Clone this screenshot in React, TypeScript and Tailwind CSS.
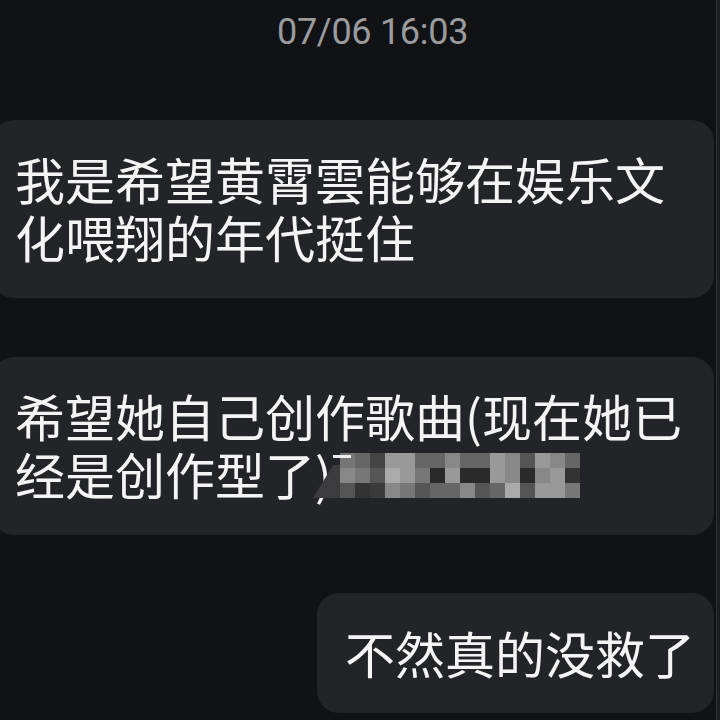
const mosaic = [
  ['bg-[#757575]', 'bg-[#666666]', 'bg-[#444444]', 'bg-[#999999]', 'bg-[#999999]', 'bg-[#666666]', 'bg-[#666666]', 'bg-[#888888]', 'bg-[#666666]', 'bg-[#666666]', 'bg-[#999999]', 'bg-[#888888]', 'bg-[#555555]', 'bg-[#999999]', 'bg-[#888888]', 'bg-[#666666]'],
  ['bg-[#888888]', 'bg-[#777777]', 'bg-[#555555]', 'bg-[#aaaaaa]', 'bg-[#999999]', 'bg-[#777777]', 'bg-[#2a2a2a]', 'bg-[#999999]', 'bg-[#2a2a2a]', 'bg-[#2a2a2a]', 'bg-[#999999]', 'bg-[#888888]', 'bg-[#2a2a2a]', 'bg-[#888888]', 'bg-[#999999]', 'bg-[#333333]'],
  ['bg-[#555555]', 'bg-[#333333]', 'bg-[#3a3a3a]', 'bg-[#888888]', 'bg-[#777777]', 'bg-[#555555]', 'bg-[#666666]', 'bg-[#666666]', 'bg-[#888888]', 'bg-[#555555]', 'bg-[#666666]', 'bg-[#aaaaaa]', 'bg-[#555555]', 'bg-[#999999]', 'bg-[#999999]', 'bg-[#777777]'],
];

// pixelated block hiding the end of the second message
function Mosaic() {
  return (
    <span className="relative inline-block align-top mt-[9px] ml-[8px]">
      <span className="absolute left-[-27px] top-[12px] w-[27px] h-[33px] bg-[#3c3c3f] [clip-path:polygon(75%_0,100%_0,100%_100%,0_100%)]" />
      <span className="grid grid-cols-[repeat(16,15px)] grid-rows-[repeat(3,15px)]">
        {mosaic.flat().map((c, i) => (
          <span key={i} className={c} />
        ))}
      </span>
      <span className="absolute left-[-7px] top-[2px] w-[18px] h-[3px] bg-[#eeeeee]" />
    </span>
  );
}

export default function App() {
  return (
    <div className="w-[720px] h-[720px] overflow-hidden bg-[#111215] flex font-['Noto_Sans_CJK_SC',sans-serif]">
      <div className="flex-1 flex flex-col pr-[2px]">
        <div className="pt-[14px] pl-[277px] font-['Roboto',sans-serif] text-[36px] leading-[36px] tracking-[-0.3px] text-[#9b9b9e]">
          07/06 16:03
        </div>

        <div className="-ml-[8px] mt-[70px] rounded-[22px] bg-[#232427] pl-[23px] pr-[10px] pt-[29px] pb-[33px] text-[50px] leading-[58px] text-[#f4f4f4]">
          我是希望黄霄雲能够在娱乐文化喂翔的年代挺住
        </div>

        <div className="-ml-[8px] mt-[59px] rounded-[22px] bg-[#232427] pl-[23px] pr-[10px] pt-[29px] pb-[33px] text-[50px] leading-[58px] text-[#f4f4f4]">
          希望她自己创作歌曲(现在她已经是创作型了)
          <Mosaic />
        </div>

        <div className="self-end mt-[58px] rounded-[22px] bg-[#232427] pl-[28px] pr-[19px] pt-[30px] pb-[32px] text-[50px] leading-[58px] text-[#f4f4f4]">
          不然真的没救了
        </div>
      </div>
      <div className="w-[4px] bg-[#1c1d20] border-l border-[#333437]" />
    </div>
  );
}
